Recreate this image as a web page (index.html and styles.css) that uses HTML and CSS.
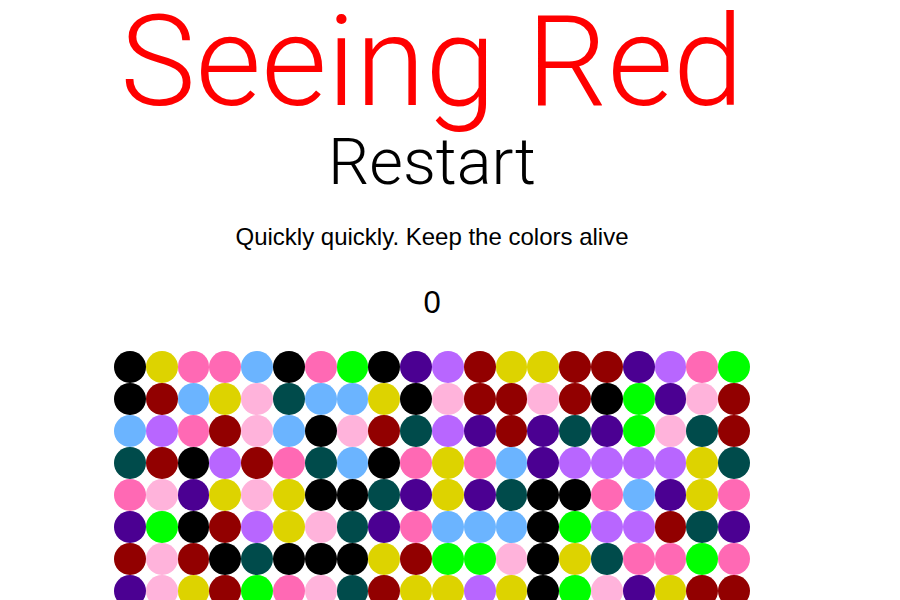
FILE: index.html
```html
<!DOCTYPE html>
<html>
<head>
<meta charset="utf-8">
<link rel="stylesheet" href="styles.css">
</head>
<body>
<div class="page">
  <h1 class="title">Seeing Red</h1>
  <div class="restart">Restart</div>
  <p class="subtitle">Quickly quickly. Keep the colors alive</p>
  <div class="score">0</div>
  <div class="board">
    <span class="dot k"></span><span class="dot y"></span><span class="dot hp"></span><span class="dot hp"></span><span class="dot lb"></span><span class="dot k"></span><span class="dot hp"></span><span class="dot g"></span><span class="dot k"></span><span class="dot in"></span><span class="dot pu"></span><span class="dot dr"></span><span class="dot y"></span><span class="dot y"></span><span class="dot dr"></span><span class="dot dr"></span><span class="dot in"></span><span class="dot pu"></span><span class="dot hp"></span><span class="dot g"></span>
    <span class="dot k"></span><span class="dot dr"></span><span class="dot lb"></span><span class="dot y"></span><span class="dot lp"></span><span class="dot t"></span><span class="dot lb"></span><span class="dot lb"></span><span class="dot y"></span><span class="dot k"></span><span class="dot lp"></span><span class="dot dr"></span><span class="dot dr"></span><span class="dot lp"></span><span class="dot dr"></span><span class="dot k"></span><span class="dot g"></span><span class="dot in"></span><span class="dot lp"></span><span class="dot dr"></span>
    <span class="dot lb"></span><span class="dot pu"></span><span class="dot hp"></span><span class="dot dr"></span><span class="dot lp"></span><span class="dot lb"></span><span class="dot k"></span><span class="dot lp"></span><span class="dot dr"></span><span class="dot t"></span><span class="dot pu"></span><span class="dot in"></span><span class="dot dr"></span><span class="dot in"></span><span class="dot t"></span><span class="dot in"></span><span class="dot g"></span><span class="dot lp"></span><span class="dot t"></span><span class="dot dr"></span>
    <span class="dot t"></span><span class="dot dr"></span><span class="dot k"></span><span class="dot pu"></span><span class="dot dr"></span><span class="dot hp"></span><span class="dot t"></span><span class="dot lb"></span><span class="dot k"></span><span class="dot hp"></span><span class="dot y"></span><span class="dot hp"></span><span class="dot lb"></span><span class="dot in"></span><span class="dot pu"></span><span class="dot pu"></span><span class="dot pu"></span><span class="dot pu"></span><span class="dot y"></span><span class="dot t"></span>
    <span class="dot hp"></span><span class="dot lp"></span><span class="dot in"></span><span class="dot y"></span><span class="dot lp"></span><span class="dot y"></span><span class="dot k"></span><span class="dot k"></span><span class="dot t"></span><span class="dot in"></span><span class="dot y"></span><span class="dot in"></span><span class="dot t"></span><span class="dot k"></span><span class="dot k"></span><span class="dot hp"></span><span class="dot lb"></span><span class="dot in"></span><span class="dot y"></span><span class="dot hp"></span>
    <span class="dot in"></span><span class="dot g"></span><span class="dot k"></span><span class="dot dr"></span><span class="dot pu"></span><span class="dot y"></span><span class="dot lp"></span><span class="dot t"></span><span class="dot in"></span><span class="dot hp"></span><span class="dot lb"></span><span class="dot lb"></span><span class="dot lb"></span><span class="dot k"></span><span class="dot g"></span><span class="dot pu"></span><span class="dot pu"></span><span class="dot dr"></span><span class="dot t"></span><span class="dot in"></span>
    <span class="dot dr"></span><span class="dot lp"></span><span class="dot dr"></span><span class="dot k"></span><span class="dot t"></span><span class="dot k"></span><span class="dot k"></span><span class="dot k"></span><span class="dot y"></span><span class="dot dr"></span><span class="dot g"></span><span class="dot g"></span><span class="dot lp"></span><span class="dot k"></span><span class="dot y"></span><span class="dot t"></span><span class="dot hp"></span><span class="dot hp"></span><span class="dot g"></span><span class="dot hp"></span>
    <span class="dot in"></span><span class="dot lp"></span><span class="dot y"></span><span class="dot dr"></span><span class="dot g"></span><span class="dot hp"></span><span class="dot lp"></span><span class="dot t"></span><span class="dot dr"></span><span class="dot y"></span><span class="dot y"></span><span class="dot pu"></span><span class="dot y"></span><span class="dot k"></span><span class="dot g"></span><span class="dot lp"></span><span class="dot in"></span><span class="dot y"></span><span class="dot dr"></span><span class="dot dr"></span><span class="dot k"></span>
  </div>
</div>
</body>
</html>
```
FILE: styles.css
```css
html, body {
  margin: 0;
  padding: 0;
  background: #ffffff;
}

.page {
  width: 864px;
  text-align: center;
  font-family: "Liberation Sans", Arial, sans-serif;
  color: #000;
}

.title {
  margin: 0;
  font-family: Roboto, "Liberation Sans", sans-serif;
  font-weight: 300;
  font-size: 127px;
  line-height: 123px;
  color: #ff0000;
}

.restart {
  margin-top: 7px;
  font-family: Roboto, "Liberation Sans", sans-serif;
  font-weight: 300;
  font-size: 65px;
  line-height: 65px;
}

.subtitle {
  margin: 30px 0 0;
  font-size: 24px;
  line-height: 24px;
}

.score {
  margin-top: 38px;
  font-size: 31px;
  line-height: 31px;
}

.board {
  width: 636px;
  margin: 33px auto 0;
  display: grid;
  grid-template-columns: repeat(20, 31.8px);
  grid-auto-rows: 32px;
}

.dot {
  display: block;
  width: 31.8px;
  height: 31.8px;
  border-radius: 50%;
}

.k  { background: #000000; }
.y  { background: #ddd300; }
.hp { background: #ff69b4; }
.lb { background: #6bb4ff; }
.g  { background: #00ff00; }
.in { background: #4b0092; }
.pu { background: #b866ff; }
.dr { background: #920000; }
.lp { background: #ffb3db; }
.t  { background: #004b4b; }
```
